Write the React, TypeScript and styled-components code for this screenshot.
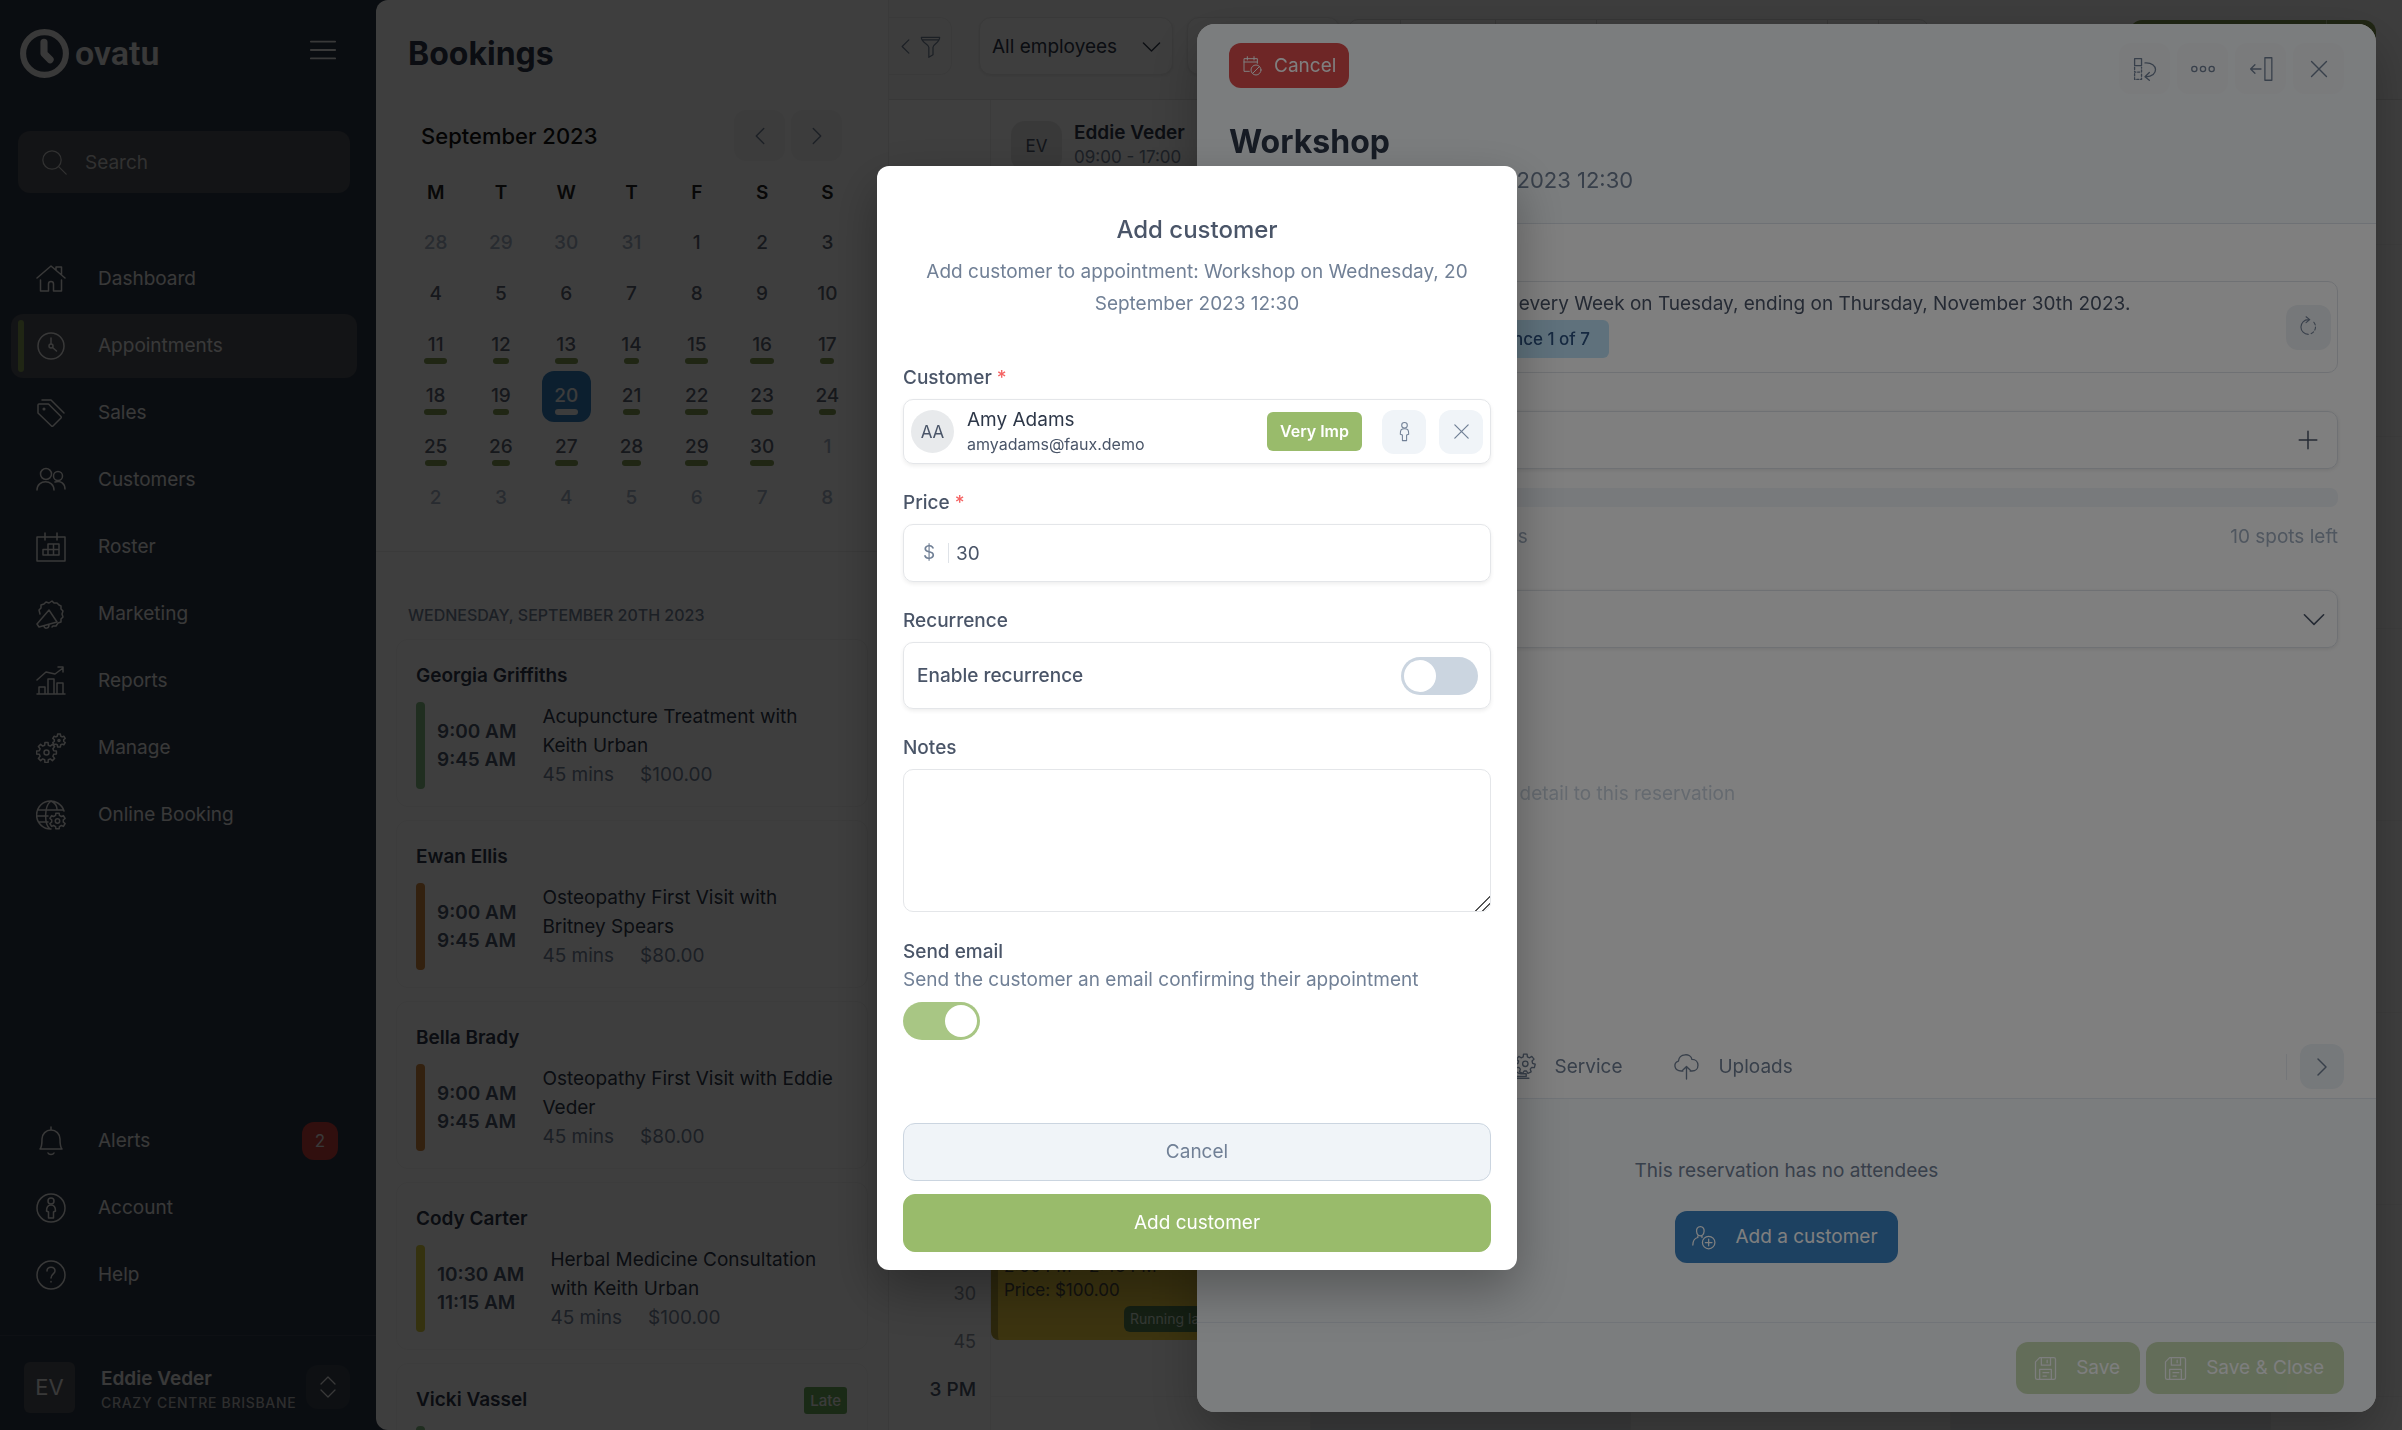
import React from "react";
import styled, { createGlobalStyle, css } from "styled-components";

const GlobalStyle = createGlobalStyle`
  *, *::before, *::after { box-sizing: border-box; }
  html, body { margin: 0; height: 100%; overflow: hidden; background: #2b3544; }
  body, button, input, select, textarea { font-family: Inter, "Liberation Sans", sans-serif; }
  body { font-size: 19px; line-height: 24px; color: #2d3748; }
  button { border: 0; padding: 0; margin: 0; background: none; color: inherit; font-size: inherit; line-height: inherit; cursor: pointer; }
  h1, h2, h3, p, ul { margin: 0; padding: 0; }
  ul { list-style: none; }
  a { color: inherit; text-decoration: none; }
`;

/* ---------- icons ---------- */

const Svg = styled.svg<{ $size?: number }>`
  width: ${(p) => p.$size ?? 30}px;
  height: ${(p) => p.$size ?? 30}px;
  flex: none;
  fill: none;
  stroke: currentColor;
  stroke-width: 1.5;
  stroke-linejoin: round;
  stroke-linecap: round;
`;

const gear = (cx: number, cy: number, r: number, teeth: number) => {
  const points: string[] = [];
  for (let i = 0; i < teeth; i += 1) {
    const a = (i / teeth) * Math.PI * 2 - Math.PI / 2;
    const step = (Math.PI * 2) / teeth;
    const at = (angle: number, radius: number) =>
      `${(cx + Math.cos(angle) * radius).toFixed(1)} ${(cy + Math.sin(angle) * radius).toFixed(1)}`;
    points.push(at(a - step * 0.2, r), at(a + step * 0.2, r), at(a + step * 0.32, r * 0.74), at(a + step * 0.68, r * 0.74));
  }
  return `M${points.join("L")}Z`;
};

const shapes: Record<string, React.ReactNode> = {
  menu: <path d="M2 6h26M2 15h26M2 24h26" strokeWidth="2" />,
  search: (
    <>
      <circle cx="12" cy="12" r="11" />
      <path d="M20 20l9 9" />
    </>
  ),
  home: <path d="M1 14L15 2l14 12M4.500 16v11h8v-7a2.500 2.500 0 0 1 5 0v7h8V16M20 6V3h5.500v8" />,
  clock: (
    <>
      <circle cx="15" cy="15" r="13" />
      <circle cx="15" cy="15" r="2" />
      <path d="M15 13V7M16.500 16.500l4 3.500" />
    </>
  ),
  tags: (
    <>
      <path d="M3 6h9.500L25 18.500a1 1 0 0 1 0 1.500l-8 8a1 1 0 0 1-1.500 0L2 15V7a1 1 0 0 1 1-1zM6 2h9l13 13" />
      <circle cx="8" cy="11" r="0.800" />
    </>
  ),
  users: (
    <>
      <circle cx="10" cy="9" r="5.500" />
      <circle cx="22" cy="11" r="4.500" />
      <path d="M1 25c0-11 17-11 17 0M19 17c6-2 10 2 10 7" />
    </>
  ),
  roster: <path d="M1 5h28v24H1zM9 1v7M21 1v7M12 12h11v11H7v-5.500h16M12 12v11M17.500 12v11" />,
  marketing: (
    <>
      <path d="M4 15l-1-4 2-2 0-3 3-1 2-2 3 1 3-2 2 2 3 0 2 2 2 1 0 3 2 2-1 3 1 3-2 2 0 3-3 1-2 3-3 0-1 1" />
      <path d="M13 11l8 12-18 5-2-3zM8 27c0 3 5 3 5-1" />
    </>
  ),
  reports: <path d="M1 28h28M3 28v-7h6v7M12 28V13h6v15M21 28V17h6v11M1 14l9-8 9 2 8-6M22 1h5v5" />,
  manage: (
    <>
      <path d={gear(10.5, 19.5, 10, 8)} />
      <circle cx="10.500" cy="19.500" r="2.500" />
      <path d={gear(23, 7.5, 6.5, 6)} />
      <circle cx="23" cy="7.500" r="1" />
    </>
  ),
  globe: (
    <>
      <path d="M28 11A14 14 0 1 0 15 29M2 10h25M1 16h11M3 22h9M15 1C8 6 8 24 14 29M15 1c4 2 6 5 6 8" />
      <path d={gear(21.5, 21, 8, 6)} />
      <circle cx="21.500" cy="21" r="2.200" />
    </>
  ),
  bell: <path d="M4 23c2-2 2-5 2-10C6 8 10 4 15 4s9 4 9 9c0 5 0 8 2 10zM15 1v3M12 27c1 2 5 2 6 0" />,
  account: (
    <>
      <circle cx="15" cy="15" r="14" />
      <circle cx="15" cy="8" r="3" />
      <path d="M12.500 25v-6l-2-1c0-4 1-6 4.500-6s4.500 2 4.500 6l-2 1v6z" />
    </>
  ),
  help: (
    <>
      <circle cx="15" cy="15" r="14" />
      <path d="M11 11c0-5 8-5 8 0 0 3-4 3-4 7M15 21.500v.5" />
    </>
  ),
  updown: <path d="M8 12l7-7 7 7M8 18l7 7 7-7" strokeWidth="1.300" />,
  left: <path d="M19 7l-8 8 8 8" />,
  right: <path d="M11 7l8 8-8 8" />,
  down: <path d="M6 11l9 9 9-9" />,
  funnel: <path d="M4 4h22c0 7-8 8-8 12v9l-5 3V16c0-4-9-5-9-12zM5 7h20" />,
  cancelDate: (
    <>
      <path d="M11 23H3V4h20v7M3 9h20M8 1v5M18 1v5" />
      <circle cx="21" cy="21" r="7.500" />
      <path d="M16 26l10-10" />
    </>
  ),
  swap: (
    <>
      <path d="M3 3h8v8H3z" />
      <path d="M3 13v5.500h8V13M3 20.500V27h8v-6.500" strokeDasharray="2.500 2" />
      <path d="M15 8c16-1 16 16 1 16M20 19l-5 5 5 4" />
    </>
  ),
  dots: (
    <>
      <circle cx="5" cy="15" r="3" />
      <circle cx="15" cy="15" r="3" />
      <circle cx="25" cy="15" r="3" />
    </>
  ),
  dock: <path d="M19.500 2h8v26h-8zM15 15H3M8 10l-5 5 5 5" />,
  close: <path d="M7 7l16 16M23 7L7 23" />,
  plus: <path d="M15 9v12M9 15h12" strokeWidth="1" />,
  redo: (
    <>
      <path d="M14 5a10 10 0 0 0 0 20M11 1l5 4-5 4" />
      <path d="M18 24a10 10 0 0 0 2-17" strokeDasharray="4 3" />
    </>
  ),
  person: (
    <>
      <circle cx="15" cy="6" r="4" />
      <path d="M12 28v-8l-3-1c0-6 1-8 6-8s6 2 6 8l-3 1v8z" />
    </>
  ),
  service: (
    <>
      <path d={gear(17, 12, 11, 7)} />
      <circle cx="17" cy="12" r="3" />
      <path d="M3 20c4-1 5 3 9 3h6v3H8M3 28h18" />
    </>
  ),
  upload: <path d="M11 20H9C1 20 0 11 6 9 7 0 20 0 21 7c9 0 9 13 0 13h-2M15 29V15M10.500 19.500L15 15l4.500 4.500" />,
  userAdd: (
    <>
      <path d="M10 2c-7 0-5 11 0 11s7-11 0-11M7 13v2c-4 1-6 4-6 9M12 13v2" />
      <circle cx="20" cy="21" r="7.500" />
      <path d="M20 17v8M16 21h8" />
    </>
  ),
  save: <path d="M3 7l5-5h17a2 2 0 0 1 2 2v22a2 2 0 0 1-2 2H5a2 2 0 0 1-2-2zM10 2v9h11V2M17 5v3M8 28V16h14v12M12 20h7M12 24h4" />,
};

const Icon = ({ name, size }: { name: string; size?: number }) => (
  <Svg viewBox="0 0 30 30" $size={size} aria-hidden="true">
    {shapes[name]}
  </Svg>
);

/* ---------- application frame ---------- */

const Shell = styled.div`
  display: grid;
  grid-template-columns: 376px 513px minmax(0, 1fr);
  height: 100vh;
  overflow: hidden;
  background: #2b3544;
`;

const Sidebar = styled.aside`
  display: flex;
  flex-direction: column;
  min-width: 0;
  color: #e4e4e4;
`;

const Brand = styled.div`
  display: flex;
  align-items: center;
  justify-content: space-between;
  height: 106px;
  padding: 0 39px 0 19px;
`;

const Logo = styled.a`
  display: flex;
  align-items: center;
  gap: 5px;
  font: 600 34px/44px Roboto, "Liberation Sans", sans-serif;
`;

const SearchBox = styled.label`
  display: flex;
  align-items: center;
  gap: 18px;
  height: 62px;
  margin: 25px 26px 0 18px;
  padding-left: 24px;
  border-radius: 12px;
  background: #4c5058;
  color: #c4c4c4;
`;

const SearchInput = styled.input`
  min-width: 0;
  flex: 1;
  padding: 0;
  border: 0;
  outline: 0;
  background: none;
  font-size: 19px;
  color: inherit;
  &::placeholder { color: #c4c4c4; opacity: 1; }
`;

const NavList = styled.ul<{ $bottom?: boolean }>`
  display: flex;
  flex-direction: column;
  gap: 3px;
  padding: 0 19px 0 11px;
  margin-top: ${(p) => (p.$bottom ? "auto" : "54px")};
  margin-bottom: ${(p) => (p.$bottom ? "28px" : "0")};
`;

const NavLink = styled.a<{ $active?: boolean }>`
  display: flex;
  align-items: center;
  height: 64px;
  padding: 0 19px 0 7px;
  border-radius: 12px;
  background: ${(p) => (p.$active ? "#4c5058" : "none")};
  &::before {
    content: "";
    width: 6px;
    height: 52px;
    margin-right: 12px;
    border-radius: 3px;
    background: ${(p) => (p.$active ? "#809850" : "none")};
  }
  svg { margin-right: 32px; }
`;

const CountBadge = styled.span`
  display: grid;
  place-items: center;
  width: 36px;
  height: 38px;
  margin-left: auto;
  border-radius: 12px;
  background: #c53c38;
  font-size: 17px;
`;

const UserBar = styled.div`
  display: flex;
  align-items: center;
  height: 95px;
  padding: 8px 26px 0 24px;
  border-top: 1px solid #3a4350;
`;

const UserAvatar = styled.span`
  display: grid;
  place-items: center;
  width: 51px;
  height: 51px;
  margin-right: 26px;
  border-radius: 6px;
  background: #4c5058;
  font-size: 22px;
`;

const UserText = styled.div`
  flex: 1;
  padding-top: 8px;
  font-weight: 600;
  white-space: nowrap;
`;

const Company = styled.div`
  font-size: 14px;
  font-weight: 500;
  letter-spacing: 0.05em;
  color: #b8b8b8;
`;

const SwitchUser = styled.button`
  display: grid;
  place-items: center;
  width: 44px;
  height: 44px;
  border-radius: 12px;
  background: #38424f;
`;

/* ---------- bookings column ---------- */

const Bookings = styled.section`
  min-width: 0;
  overflow: hidden;
  border-right: 1px solid #eaeaea;
  border-radius: 12px 0 0 12px;
  background: #fbfbfb;
`;

const PageTitle = styled.h1`
  padding: 34px 32px 0;
  font-size: 32px;
  line-height: 40px;
  font-weight: 700;
  color: #2d3748;
`;

const MonthBar = styled.div`
  display: flex;
  align-items: center;
  gap: 6px;
  margin: 36px 46px 20px 45px;
  font-size: 22px;
  font-weight: 500;
  color: #111;
  span { flex: 1; }
`;

const SoftButton = styled.button<{ $w?: number; $h?: number; $bg?: string }>`
  display: grid;
  place-items: center;
  flex: none;
  width: ${(p) => p.$w ?? 51}px;
  height: ${(p) => p.$h ?? 51}px;
  border-radius: 12px;
  background: ${(p) => p.$bg ?? "#f1f1f1"};
  color: #718096;
`;

const Calendar = styled.div`
  display: grid;
  grid-template-columns: repeat(7, 1fr);
  margin: 0 28px 0 27px;
  padding-bottom: 27px;
  justify-items: center;
`;

const Weekday = styled.span`
  height: 37px;
  font-size: 19px;
  font-weight: 600;
  color: #222;
`;

const Day = styled.button<{ $muted?: boolean; $today?: boolean }>`
  display: flex;
  flex-direction: column;
  align-items: center;
  gap: 3px;
  width: 49px;
  height: 51px;
  padding-top: 15px;
  border-radius: 12px;
  font-size: 19px;
  line-height: 20px;
  font-weight: 500;
  color: ${(p) => (p.$today ? "#f0f0f0" : p.$muted ? "#a0aec0" : "#5b6270")};
  background: ${(p) => (p.$today ? "#317ebe" : "none")};
`;

const DayLoad = styled.span<{ $today?: boolean }>`
  height: 6px;
  border-radius: 3px;
  background: ${(p) => (p.$today ? "#f0f0f0" : "#809850")};
`;

const DateHeading = styled.h2`
  padding: 51px 32px 12px;
  border-top: 1px solid #eaeaea;
  font-size: 16px;
  line-height: 24px;
  font-weight: 500;
  color: #718096;
  text-transform: uppercase;
`;

const CardList = styled.div`
  display: flex;
  flex-direction: column;
  gap: 13px;
  padding: 0 20px;
`;

const Card = styled.article`
  height: 168px;
  flex: none;
  padding: 22px 20px 0 19px;
  border: 1px solid #f1f1f1;
  border-radius: 12px;
`;

const CardHead = styled.div`
  display: flex;
  align-items: center;
  justify-content: space-between;
  height: 28px;
  margin-bottom: 12px;
  font-weight: 600;
  color: #2d3748;
`;

const StatusTag = styled.span`
  padding: 0 6px;
  border-radius: 3px;
  background: #6aaa58;
  color: #eee;
  font-size: 15px;
  line-height: 27px;
  font-weight: 500;
`;

const CardBody = styled.div`
  display: flex;
  align-items: center;
`;

const Stripe = styled.span<{ $color: string }>`
  width: 9px;
  height: 87px;
  margin-right: 12px;
  border-radius: 4px;
  background: ${(p) => p.$color};
`;

const Times = styled.div`
  margin-right: 26px;
  line-height: 28px;
  font-weight: 600;
  white-space: nowrap;
  color: #4a5568;
`;

const Treatment = styled.div`
  flex: 1;
  padding-right: 8px;
  line-height: 29px;
  color: #2d3748;
`;

const Facts = styled.div`
  display: flex;
  gap: 26px;
  color: #718096;
`;

/* ---------- schedule ---------- */

const Schedule = styled.main`
  display: flex;
  flex-direction: column;
  min-width: 0;
  overflow: hidden;
  background: #fcfcfc;
`;

const Toolbar = styled.div`
  display: flex;
  flex: none;
  height: 100px;
  padding: 17px 26px 0 0;
  border-bottom: 1px solid #e2e2e2;
  background: #f6f6f6;
`;

const FilterButton = styled.button`
  display: flex;
  align-items: center;
  width: 63px;
  height: 58px;
  padding-left: 4px;
  border: 1px solid #eaeaea;
  border-left: 0;
  border-radius: 0 12px 12px 0;
  color: #718096;
`;

const SelectWrap = styled.div<{ $wide?: boolean }>`
  display: grid;
  grid-template-columns: 1fr auto;
  align-items: center;
  width: ${(p) => (p.$wide ? 153 : 194)}px;
  height: 58px;
  margin-left: ${(p) => (p.$wide ? 14 : 27)}px;
  padding-right: 7px;
  border: 1px solid #e6e6e6;
  border-radius: 12px;
  background: #f8f8f8;
  box-shadow: 0 1px 3px rgba(0, 0, 0, 0.08);
  color: #2d3748;
  svg { grid-area: 1 / 2; pointer-events: none; }
`;

const Select = styled.select`
  grid-area: 1 / 1 / 2 / 3;
  appearance: none;
  width: 100%;
  height: 100%;
  padding: 0 12px;
  border: 0;
  outline: 0;
  background: none;
  font-size: 19px;
  color: #2d3748;
`;

const ViewSwitch = styled.div`
  display: grid;
  grid-template-columns: 51px 95px 101px 231px 51px 50px;
  height: 54px;
  margin: 2px auto 0 8px;
  border: 1px solid #dadada;
  border-radius: 10px;
  span + span { border-left: 1px solid #dadada; }
`;

const NewButton = styled.button`
  width: 246px;
  height: 54px;
  margin-top: 3px;
  border-radius: 12px;
  background: linear-gradient(to right, #809850 196px, #b0c090 196px, #b0c090 197px, #809850 197px);
`;

const Staff = styled.div`
  display: flex;
  gap: 12px;
  flex: none;
  height: 82px;
  margin-left: 101px;
  padding: 21px 0 0 20px;
  border-left: 1px solid #ececec;
`;

const StaffAvatar = styled.span`
  display: grid;
  place-items: center;
  width: 51px;
  height: 50px;
  border-radius: 14px;
  background: #e6e6e6;
  font-size: 17px;
  color: #4a5568;
`;

const StaffName = styled.div`
  font-weight: 600;
  color: #2d3748;
`;

const StaffHours = styled.div`
  font-size: 17px;
  color: #718096;
`;

const Grid = styled.div`
  display: grid;
  grid-template-columns: 101px repeat(5, 320px);
  flex: 1;
  min-height: 0;
  padding-top: 6px;
  overflow: hidden;
`;

const Slot = styled.div<{ $hour?: boolean }>`
  height: 48px;
  padding-right: 14px;
  text-align: right;
  line-height: 4px;
  font-size: ${(p) => (p.$hour ? 19 : 18)}px;
  font-weight: ${(p) => (p.$hour ? 500 : 400)};
  color: ${(p) => (p.$hour ? "#4a5568" : "#8a93a0")};
`;

const Column = styled.div<{ $shade?: boolean }>`
  position: relative;
  border-left: 1px solid #f0f0f0;
  background: repeating-linear-gradient(#f4f4f4 0 1px, transparent 1px 192px) 0 56px,
    ${(p) => (p.$shade ? "#ebedf0" : "#fcfcfc")};
`;

/* Placed on the time canvas by its start slot and length. */
const Appointment = styled.div`
  position: absolute;
  left: 0;
  right: 10px;
  top: ${21 * 48}px;
  height: ${3 * 48}px;
  padding: 10px 6px;
  border-left: 7px solid #b09c34;
  border-radius: 0 6px 6px 8px;
  background: #f0d040;
  font-size: 17px;
  color: #4a4a40;
  overflow: hidden;
`;

const LateTag = styled.span`
  display: block;
  width: 120px;
  margin: 4px 0 0 120px;
  padding-left: 6px;
  border-radius: 6px;
  background: #548050;
  color: #d8e8d8;
  font-size: 14px;
  line-height: 26px;
`;

/* ---------- overlays ---------- */

const Scrim = styled.div<{ $center?: boolean }>`
  position: fixed;
  inset: 0;
  display: flex;
  padding-right: 8px;
  background: rgba(0, 0, 0, 0.5);
  ${(p) =>
    p.$center
      ? css`
          align-items: center;
          justify-content: center;
        `
      : css`
          padding: 24px 26px 18px 0;
          justify-content: flex-end;
        `}
`;

const Drawer = styled.section`
  display: flex;
  flex-direction: column;
  width: calc(50% - 9px);
  border-radius: 18px;
  overflow: hidden;
  background: #fff;
  box-shadow: 0 20px 50px rgba(0, 0, 0, 0.25);
`;

const DrawerHead = styled.header`
  height: 200px;
  flex: none;
  padding: 19px 32px 0;
  border-bottom: 1px solid #dde3ea;
  background: #f7fafc;
`;

const DrawerTools = styled.div`
  display: flex;
  gap: 7px;
  align-items: flex-start;
`;

const DangerButton = styled.button`
  display: flex;
  align-items: center;
  gap: 12px;
  height: 45px;
  margin-right: auto;
  padding: 0 13px;
  border-radius: 12px;
  background: #dc4c4c;
  color: #fff;
`;

const DrawerTitle = styled.h2`
  margin-top: 28px;
  font-size: 32px;
  line-height: 40px;
  font-weight: 700;
  color: #2d3748;
`;

const DrawerDate = styled.p`
  margin-top: 4px;
  font-size: 22px;
  line-height: 28px;
  color: #718096;
`;

const DrawerBody = styled.div`
  flex: 1;
  min-height: 0;
  padding: 57px 38px 0 32px;
`;

const Row = styled.div<{ $tall?: boolean }>`
  display: flex;
  align-items: center;
  justify-content: flex-end;
  height: ${(p) => (p.$tall ? 92 : 58)}px;
  padding: ${(p) => (p.$tall ? "0 6px 0 198px" : "0 7px")};
  border: 1px solid #dfe3e8;
  border-radius: 10px;
  box-shadow: ${(p) => (p.$tall ? "none" : "0 1px 4px rgba(0, 0, 0, 0.1)")};
  color: #4a5568;
`;

const Repeat = styled.div`
  flex: 1;
  padding-bottom: 4px;
  color: #4a5568;
`;

const InfoTag = styled.span`
  display: table;
  margin-top: 4px;
  padding: 0 19px;
  border-radius: 6px;
  background: #bee3f8;
  color: #2c5282;
  font-size: 17px;
  line-height: 38px;
  font-weight: 500;
`;

const Capacity = styled.div`
  height: 19px;
  margin: 19px 0 18px;
  border-radius: 8px;
  background: #f0f4f8;
`;

const Spots = styled.div`
  display: flex;
  justify-content: space-between;
  margin-bottom: 41px;
  color: #a0aec0;
`;

const Gap = styled.div`
  height: 38px;
`;

const Detail = styled.p`
  margin: 134px 0 0;
  padding-left: 24px;
  color: #cbd5e0;
`;

const Tabs = styled.nav`
  display: flex;
  align-items: center;
  height: 64px;
  flex: none;
  padding: 0 32px 0 48px;
  border-bottom: 1px solid #e2e8f0;
  color: #718096;
`;

const Tab = styled.a`
  display: flex;
  align-items: center;
  gap: 18px;
  padding-right: 51px;
`;

const TabMore = styled.div`
  display: flex;
  align-items: center;
  gap: 13px;
  margin-left: auto;
  &::before {
    content: "";
    width: 1px;
    height: 26px;
    background: #e8edf2;
  }
`;

const Attendees = styled.div`
  display: flex;
  flex-direction: column;
  align-items: center;
  gap: 28px;
  height: 223px;
  flex: none;
  padding-top: 60px;
  background: #f7fafc;
  color: #718096;
`;

const IconButton = styled.button<{ $bg: string; $faded?: boolean }>`
  display: flex;
  align-items: center;
  gap: 18px;
  height: 52px;
  padding: 0 20px 0 17px;
  border-radius: 12px;
  background: ${(p) => p.$bg};
  color: #fff;
  opacity: ${(p) => (p.$faded ? 0.5 : 1)};
`;

const DrawerFoot = styled.footer`
  display: flex;
  justify-content: flex-end;
  gap: 6px;
  height: 90px;
  flex: none;
  padding: 19px 32px 0;
  border-top: 1px solid #e2e8f0;
  background: #f7fafc;
`;

const Modal = styled.form`
  width: 640px;
  margin-bottom: -6px;
  padding: 45px 26px 18px;
  border-radius: 12px;
  background: #fff;
  box-shadow: 0 20px 50px rgba(0, 0, 0, 0.3);
  color: #4a5568;
`;

const ModalTitle = styled.h2`
  font-size: 24px;
  line-height: 38px;
  font-weight: 500;
  text-align: center;
`;

const ModalText = styled.p`
  margin: 7px 0 46px;
  padding: 0 16px;
  line-height: 32px;
  text-align: center;
  color: #718096;
`;

const Label = styled.label`
  display: block;
  margin-bottom: 9px;
  font-weight: 500;
  em { font-style: normal; color: #f56565; }
`;

const Field = styled.div<{ $h: number }>`
  display: flex;
  align-items: center;
  height: ${(p) => p.$h}px;
  margin-bottom: 27px;
  padding: 0 7px;
  border: 1px solid #e4e6e9;
  border-radius: 10px;
  box-shadow: 0 2px 4px rgba(0, 0, 0, 0.07);
`;

const Initials = styled.span`
  display: grid;
  place-items: center;
  width: 43px;
  height: 43px;
  margin-right: 13px;
  border-radius: 50%;
  background: #e8eaec;
  font-size: 17px;
`;

const Person = styled.div`
  flex: 1;
  color: #2d3748;
`;

const Email = styled.div`
  font-size: 16px;
  color: #4a5568;
`;

const VipTag = styled.span`
  margin-right: 20px;
  padding: 0 13px;
  border-radius: 6px;
  background: #99bb6b;
  color: #fff;
  font-size: 16px;
  line-height: 39px;
  font-weight: 600;
`;

const FieldButtons = styled.div`
  display: flex;
  gap: 13px;
`;

const Currency = styled.span`
  width: 38px;
  padding-left: 12px;
  border-right: 1px solid #dfe3e8;
  font-size: 19px;
  line-height: 20px;
  color: #718096;
`;

const PriceInput = styled.input`
  flex: 1;
  min-width: 0;
  padding: 0 7px;
  border: 0;
  outline: 0;
  background: none;
  font-size: 19px;
  color: #4a5568;
`;

const ToggleText = styled.label`
  flex: 1;
  padding-left: 6px;
  font-weight: 500;
`;

const Toggle = styled.input`
  appearance: none;
  width: 77px;
  height: 38px;
  margin: 0 5px 0 0;
  padding: 3px;
  border-radius: 19px;
  background: #cbd5e0;
  display: flex;
  &::before {
    content: "";
    width: 32px;
    height: 32px;
    border-radius: 50%;
    background: #fff;
  }
  &:checked { background: #a8c684; justify-content: flex-end; }
`;

const Notes = styled.textarea`
  display: block;
  width: 100%;
  height: 143px;
  margin-bottom: 26px;
  border: 1px solid #e4e6e9;
  border-radius: 10px;
  outline: 0;
  resize: vertical;
  &::-webkit-resizer {
    background: linear-gradient(135deg, transparent 48%, #555 48% 54%, transparent 54% 73%, #555 73% 79%, transparent 79%);
  }
`;

const EmailLabel = styled.label`
  display: block;
  font-weight: 500;
  line-height: 28px;
`;

const EmailHint = styled.p`
  margin-bottom: 8px;
  line-height: 28px;
  color: #718096;
`;

const Actions = styled.div`
  display: flex;
  flex-direction: column;
  gap: 13px;
  margin-top: 83px;
`;

const ActionButton = styled.button<{ $primary?: boolean }>`
  height: 58px;
  border-radius: 12px;
  border: 1px solid ${(p) => (p.$primary ? "#99bb6b" : "#cbd5e0")};
  background: ${(p) => (p.$primary ? "#99bb6b" : "#f0f4f8")};
  color: ${(p) => (p.$primary ? "#fff" : "#718096")};
`;

/* ---------- data ---------- */

const mainNav = [
  ["home", "Dashboard"],
  ["clock", "Appointments"],
  ["tags", "Sales"],
  ["users", "Customers"],
  ["roster", "Roster"],
  ["marketing", "Marketing"],
  ["reports", "Reports"],
  ["manage", "Manage"],
  ["globe", "Online Booking"],
];

const footNav = [
  ["bell", "Alerts"],
  ["account", "Account"],
  ["help", "Help"],
];

const loads: Record<number, number> = {
  11: 23, 12: 16, 13: 23, 14: 15, 15: 23, 16: 24, 17: 14,
  18: 23, 19: 16, 20: 23, 21: 17, 22: 23, 23: 22, 24: 17,
  25: 22, 26: 18, 27: 23, 28: 19, 29: 23, 30: 24,
};

const days = Array.from({ length: 42 }, (_, i) => {
  const n = i - 3;
  if (n < 1) return { day: 31 + n, other: true };
  if (n > 30) return { day: n - 30, other: true };
  return { day: n, other: false };
});

const bookings = [
  { name: "Georgia Griffiths", color: "#80b880", from: "9:00 AM", to: "9:45 AM", what: "Acupuncture Treatment with Keith Urban", price: "$100.00" },
  { name: "Ewan Ellis", color: "#cc843c", from: "9:00 AM", to: "9:45 AM", what: "Osteopathy First Visit with Britney Spears", price: "$80.00" },
  { name: "Bella Brady", color: "#cc843c", from: "9:00 AM", to: "9:45 AM", what: "Osteopathy First Visit with Eddie Veder", price: "$80.00" },
  { name: "Cody Carter", color: "#d4c83c", from: "10:30 AM", to: "11:15 AM", what: "Herbal Medicine Consultation with Keith Urban", price: "$100.00" },
  { name: "Vicki Vassel", tag: "Late", color: "#80b880", from: "11:00 AM", to: "11:45 AM", what: "Acupuncture Treatment with Keith Urban", price: "$100.00" },
];

const slots = Array.from({ length: 26 }, (_, i) => {
  const minutes = 8 * 60 + 45 + i * 15;
  const hour = Math.floor(minutes / 60);
  const rest = minutes % 60;
  return rest === 0 ? { hour: true, text: `${hour > 12 ? hour - 12 : hour} ${hour >= 12 ? "PM" : "AM"}` } : { hour: false, text: String(rest) };
});

/* ---------- views ---------- */

const SidebarView = () => (
  <Sidebar>
    <Brand>
      <Logo href="#">
        <Svg viewBox="0 0 50 50" $size={51} aria-hidden="true">
          <circle cx="25" cy="25" r="21" strokeWidth="6" />
          <path d="M24.500 14v11l6 6" strokeWidth="7" />
        </Svg>
        ovatu
      </Logo>
      <button type="button" aria-label="Menu">
        <Icon name="menu" size={28} />
      </button>
    </Brand>
    <SearchBox>
      <Icon name="search" size={25} />
      <SearchInput placeholder="Search" aria-label="Search" />
    </SearchBox>
    <NavList>
      {mainNav.map(([icon, text]) => (
        <li key={text}>
          <NavLink href="#" $active={text === "Appointments"}>
            <Icon name={icon} />
            {text}
          </NavLink>
        </li>
      ))}
    </NavList>
    <NavList $bottom>
      {footNav.map(([icon, text]) => (
        <li key={text}>
          <NavLink href="#">
            <Icon name={icon} />
            {text}
            {text === "Alerts" && <CountBadge>2</CountBadge>}
          </NavLink>
        </li>
      ))}
    </NavList>
    <UserBar>
      <UserAvatar>EV</UserAvatar>
      <UserText>
        Eddie Veder
        <Company>CRAZY CENTRE BRISBANE</Company>
      </UserText>
      <SwitchUser type="button" aria-label="Switch user">
        <Icon name="updown" size={30} />
      </SwitchUser>
    </UserBar>
  </Sidebar>
);

const BookingsView = () => (
  <Bookings>
    <PageTitle>Bookings</PageTitle>
    <MonthBar>
      <span>September 2023</span>
      <SoftButton type="button" aria-label="Previous month">
        <Icon name="left" size={28} />
      </SoftButton>
      <SoftButton type="button" aria-label="Next month">
        <Icon name="right" size={28} />
      </SoftButton>
    </MonthBar>
    <Calendar>
      {["M", "T", "W", "T", "F", "S", "S"].map((d, i) => (
        <Weekday key={i}>{d}</Weekday>
      ))}
      {days.map(({ day, other }, i) => {
        const today = !other && day === 20;
        return (
          <Day key={i} type="button" $muted={other} $today={today}>
            {day}
            {!other && loads[day] && <DayLoad $today={today} style={{ width: loads[day] }} />}
          </Day>
        );
      })}
    </Calendar>
    <DateHeading>Wednesday, September 20th 2023</DateHeading>
    <CardList>
      {bookings.map((b) => (
        <Card key={b.name}>
          <CardHead>
            {b.name}
            {b.tag && <StatusTag>{b.tag}</StatusTag>}
          </CardHead>
          <CardBody>
            <Stripe $color={b.color} />
            <Times>
              {b.from}
              <br />
              {b.to}
            </Times>
            <Treatment>
              {b.what}
              <Facts>
                <span>45 mins</span>
                <span>{b.price}</span>
              </Facts>
            </Treatment>
          </CardBody>
        </Card>
      ))}
    </CardList>
  </Bookings>
);

const ScheduleView = () => (
  <Schedule>
    <Toolbar>
      <FilterButton type="button" aria-label="Filter">
        <Icon name="left" size={25} />
        <Icon name="funnel" size={25} />
      </FilterButton>
      <SelectWrap>
        <Select aria-label="Employees" defaultValue="all">
          <option value="all">All employees</option>
        </Select>
        <Icon name="down" size={27} />
      </SelectWrap>
      <SelectWrap $wide />
      <ViewSwitch>
        <span /><span /><span /><span /><span /><span />
      </ViewSwitch>
      <NewButton type="button" aria-label="New booking" />
    </Toolbar>
    <Staff>
      <StaffAvatar>EV</StaffAvatar>
      <div>
        <StaffName>Eddie Veder</StaffName>
        <StaffHours>09:00 - 17:00</StaffHours>
      </div>
    </Staff>
    <Grid>
      <div>
        {slots.map((s, i) => (
          <Slot key={i} $hour={s.hour}>{s.text}</Slot>
        ))}
      </div>
      <Column>
        <Appointment>
          Dana Doyle
          <br />
          Osteopathy
          <br />
          2:00 PM - 2:45 PM
          <br />
          Price: $100.00
          <LateTag>Running late</LateTag>
        </Appointment>
      </Column>
      <Column $shade />
      <Column />
      <Column $shade />
      <Column />
    </Grid>
  </Schedule>
);

const DrawerView = () => (
  <Drawer aria-label="Workshop">
    <DrawerHead>
      <DrawerTools>
        <DangerButton type="button">
          <Icon name="cancelDate" size={20} />
          Cancel
        </DangerButton>
        {["swap", "dots", "dock", "close"].map((name) => (
          <SoftButton key={name} type="button" aria-label={name} $bg="#f4f6f9">
            <Icon name={name} size={name === "close" ? 28 : 26} />
          </SoftButton>
        ))}
      </DrawerTools>
      <DrawerTitle>Workshop</DrawerTitle>
      <DrawerDate>Wednesday, 20 September 2023 12:30</DrawerDate>
    </DrawerHead>
    <DrawerBody>
      <Row $tall>
        <Repeat>
          Repeated every Week on Tuesday, ending on Thursday, November 30th 2023.
          <InfoTag>Occurrence 1 of 7</InfoTag>
        </Repeat>
        <SoftButton type="button" aria-label="Change recurrence" $w={45} $h={45} $bg="#edf0f4">
          <Icon name="redo" size={22} />
        </SoftButton>
      </Row>
      <Gap />
      <Row>
        <Icon name="plus" size={44} />
      </Row>
      <Capacity />
      <Spots>
        <span>0 attendees of 10 allowed spaces</span>
        <span>10 spots left</span>
      </Spots>
      <Row>
        <Icon name="down" size={32} />
      </Row>
      <Detail>Use this space to add further detail to this reservation</Detail>
    </DrawerBody>
    <Tabs>
      <Tab href="#"><Icon name="users" size={25} />Reservation details</Tab>
      <Tab href="#"><Icon name="service" size={27} />Service</Tab>
      <Tab href="#"><Icon name="upload" size={27} />Uploads</Tab>
      <TabMore>
        <SoftButton type="button" aria-label="More tabs" $w={44} $h={45} $bg="#edf2f7">
          <Icon name="right" size={30} />
        </SoftButton>
      </TabMore>
    </Tabs>
    <Attendees>
      This reservation has no attendees
      <IconButton type="button" $bg="#3a82c2">
        <Icon name="userAdd" size={25} />
        Add a customer
      </IconButton>
    </Attendees>
    <DrawerFoot>
      <IconButton type="button" $bg="#99bb6b" $faded>
        <Icon name="save" size={25} />
        Save
      </IconButton>
      <IconButton type="button" $bg="#99bb6b" $faded>
        <Icon name="save" size={25} />
        Save &amp; Close
      </IconButton>
    </DrawerFoot>
  </Drawer>
);

const ModalView = () => (
  <Modal aria-label="Add customer" onSubmit={(e) => e.preventDefault()}>
    <ModalTitle>Add customer</ModalTitle>
    <ModalText>Add customer to appointment: Workshop on Wednesday, 20 September 2023 12:30</ModalText>
    <Label as="div">Customer <em>*</em></Label>
    <Field $h={65}>
      <Initials>AA</Initials>
      <Person>
        Amy Adams
        <Email>amyadams@faux.demo</Email>
      </Person>
      <VipTag>Very Imp</VipTag>
      <FieldButtons>
        <SoftButton type="button" aria-label="View customer" $w={44} $h={44} $bg="#f0f4f8">
          <Icon name="person" size={21} />
        </SoftButton>
        <SoftButton type="button" aria-label="Remove customer" $w={44} $h={44} $bg="#f0f4f8">
          <Icon name="close" size={25} />
        </SoftButton>
      </FieldButtons>
    </Field>
    <Label htmlFor="price">Price <em>*</em></Label>
    <Field $h={58}>
      <Currency>$</Currency>
      <PriceInput id="price" defaultValue="30" />
    </Field>
    <Label as="div">Recurrence</Label>
    <Field $h={67}>
      <ToggleText htmlFor="recurrence">Enable recurrence</ToggleText>
      <Toggle id="recurrence" type="checkbox" />
    </Field>
    <Label htmlFor="notes">Notes</Label>
    <Notes id="notes" />
    <EmailLabel htmlFor="email">Send email</EmailLabel>
    <EmailHint>Send the customer an email confirming their appointment</EmailHint>
    <Toggle id="email" type="checkbox" defaultChecked />
    <Actions>
      <ActionButton type="button">Cancel</ActionButton>
      <ActionButton type="submit" $primary>Add customer</ActionButton>
    </Actions>
  </Modal>
);

export default function App() {
  return (
    <>
      <GlobalStyle />
      <Shell>
        <SidebarView />
        <BookingsView />
        <ScheduleView />
      </Shell>
      <Scrim>
        <DrawerView />
      </Scrim>
      <Scrim $center>
        <ModalView />
      </Scrim>
    </>
  );
}
